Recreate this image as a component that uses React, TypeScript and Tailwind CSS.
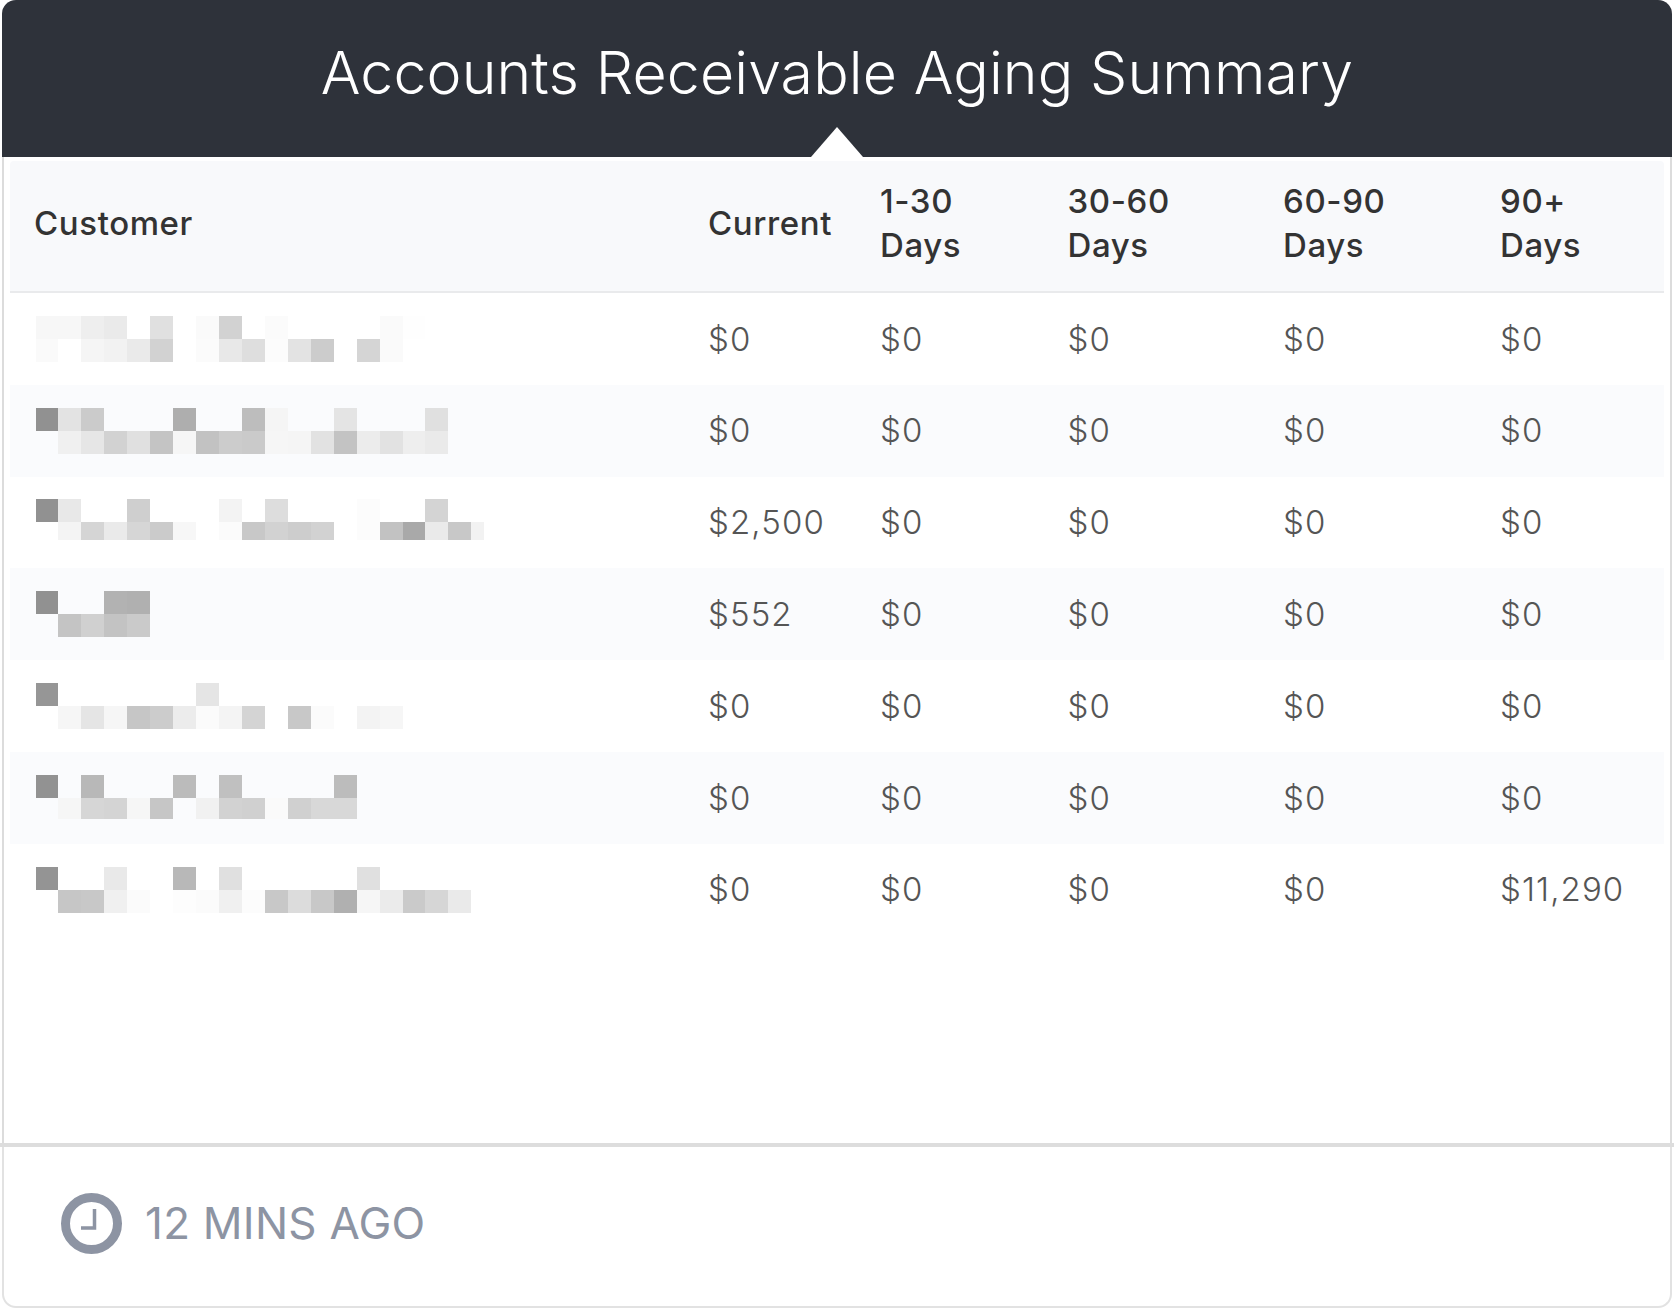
const columns = 'grid grid-cols-[698px_172px_187.5px_215.5px_217px_1fr]';

type Row = { top: string; bottom: string; bottomHeight: string; values: string[] };

// Each mosaic row: cells separated by a space, "--" is an empty cell, others are the grey level
const rows: Row[] = [
  {
    top: 'f7 f7 ee ea -- e0 -- fa d2 -- fb -- -- -- -- fa fe',
    bottom: 'fa -- f5 f2 ea d2 -- fb e8 de fc e3 cc -- d5 fa',
    bottomHeight: 'h-[23px]',
    values: ['$0', '$0', '$0', '$0', '$0'],
  },
  {
    top: '91 e3 cb -- -- -- ae -- -- bd f5 -- -- e4 -- -- -- e0',
    bottom: '-- f0 e6 d2 e0 c4 f6 c2 cc ca f6 f5 e2 c3 ec e2 ee ea',
    bottomHeight: 'h-[23px]',
    values: ['$0', '$0', '$0', '$0', '$0'],
  },
  {
    top: '91 e8 -- -- cf -- -- -- f3 -- dd -- -- -- fc -- -- d4',
    bottom: '-- f4 d5 ea d6 cb f7 -- fb c8 d2 cd d2 -- fc c2 a9 ea c8 f2',
    bottomHeight: 'h-[18px]',
    values: ['$2,500', '$0', '$0', '$0', '$0'],
  },
  {
    top: '91 -- -- b2 b0',
    bottom: '-- c4 d0 c3 ca',
    bottomHeight: 'h-[23px]',
    values: ['$552', '$0', '$0', '$0', '$0'],
  },
  {
    top: '96 -- -- -- -- -- -- e5',
    bottom: '-- f6 e5 f6 c6 cc ec fb f4 d4 -- c8 fb -- f3 f6',
    bottomHeight: 'h-[23px]',
    values: ['$0', '$0', '$0', '$0', '$0'],
  },
  {
    top: '92 -- b8 -- -- -- bb -- c0 -- -- -- -- bc',
    bottom: '-- f6 d6 d4 f6 c6 -- f1 d2 d0 fa d0 d8 d8',
    bottomHeight: 'h-[21px]',
    values: ['$0', '$0', '$0', '$0', '$0'],
  },
  {
    top: '94 -- -- e9 -- -- b8 -- e0 -- -- -- -- -- e0',
    bottom: '-- c6 c8 f0 fb -- fd fb f0 fc c8 dc c8 b0 f6 eb ca d6 ea',
    bottomHeight: 'h-[23px]',
    values: ['$0', '$0', '$0', '$0', '$11,290'],
  },
];

const MosaicLine = ({ cells, height }: { cells: string; height: string }) => (
  <div className={`flex ${height}`}>
    {cells.split(' ').map((c, i) => (
      <div
        key={i}
        className={`h-full shrink-0 ${i === 19 ? 'w-[13px]' : 'w-[22.95px]'}`}
        style={c === '--' ? undefined : { backgroundColor: `#${c}${c}${c}` }}
      />
    ))}
  </div>
);

const ClockIcon = () => (
  <svg width="61" height="61" viewBox="0 0 61 61" fill="none" stroke="#8d94a3">
    <circle cx="30.5" cy="30.5" r="26" strokeWidth="9" />
    <path d="M33.5 16v19H20" strokeWidth="3.5" />
  </svg>
);

export default function App() {
  return (
    <div className="w-[1674px] h-[1308px] flex flex-col bg-white font-['Inter','Liberation_Sans',sans-serif]">
      <div className="relative mx-[2px] h-[157px] shrink-0 bg-[#2e323a] rounded-t-[14px] flex justify-center pt-[38px]">
        <h1 className="text-[59px] leading-[70px] tracking-[0.12px] font-light text-white">Accounts Receivable Aging Summary</h1>
        <div className="absolute left-[809px] bottom-0 w-0 h-0 border-x-[26px] border-x-transparent border-b-[30px] border-b-white" />
      </div>

      <div className="mx-[2px] flex-1 border-x-[2px] border-[#dcdcdc] px-[6px] pt-[4px]">
        <div className={`${columns} h-[132px] items-center pb-[6px] bg-[#f8f9fb] border-b-2 border-[#e9eaec] rounded-t-[4px] text-[33px] leading-[44px] tracking-[0.6px] font-medium text-[#333]`}>
          <div className="pl-[24px]">Customer</div>
          <div>Current</div>
          <div>1-30<br />Days</div>
          <div>30-60<br />Days</div>
          <div>60-90<br />Days</div>
          <div>90+<br />Days</div>
        </div>
        {rows.map((row, i) => (
          <div
            key={i}
            className={`${columns} h-[91.8px] items-center text-[33px] tracking-[1.1px] font-light text-[#555] ${i % 2 === 1 ? 'bg-[#fafbfd]' : ''}`}
          >
            <div className="pl-[25.5px] h-[46px]">
              <MosaicLine cells={row.top} height="h-[23px]" />
              <MosaicLine cells={row.bottom} height={row.bottomHeight} />
            </div>
            {row.values.map((v, j) => (
              <div key={j} className="pt-px">{v}</div>
            ))}
          </div>
        ))}
      </div>

      <div className="h-[4px] shrink-0 bg-[#dddddd]" />

      <div className="mx-[2px] h-[161px] shrink-0 border-x-[2px] border-b-[2px] border-[#e2e2e2] rounded-b-[14px] flex items-center gap-[23px] pl-[57px] pb-[7px]">
        <ClockIcon />
        <span className="text-[44px] tracking-[0.25px] text-[#8d94a3]">12 MINS AGO</span>
      </div>
    </div>
  );
}
